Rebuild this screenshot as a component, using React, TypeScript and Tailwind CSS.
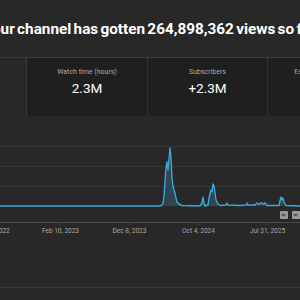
import React from "react";

const pts: [number, number][] = [
  [0, 206], [160, 206], [162, 205], [163, 203], [164, 196], [165, 182], [166, 168], [167, 162], [168, 170], [169, 160], [170, 148], [171, 158], [172, 178], [173, 186], [174, 190], [175, 193], [176, 198], [177, 202], [179, 204], [182, 205.5],
  [200, 206], [202, 203], [203, 197], [204, 203], [205, 206], [208, 205], [209, 198], [210, 194], [211, 190], [212, 192], [213, 184], [214, 186], [215, 193], [216, 200], [218, 204], [220, 205.5],
  [226, 205], [227, 203], [228, 205], [240, 205.5], [246, 205], [247, 203], [248, 205], [255, 205], [257, 203], [259, 204.5], [261, 202.5], [263, 204], [265, 203], [267, 205.5],
  [279, 205.5], [280, 201], [281, 197], [282, 200], [283, 198], [284, 202], [286, 205.5], [300, 206],
];

const linePath = pts.map((p, i) => `${i === 0 ? "M" : "L"}${p[0]} ${p[1]}`).join(" ");
const areaPath = `${linePath} L300 206 L0 206 Z`;

export default function App() {
  return (
    <div className="w-[300px] h-[300px] bg-[#282828] overflow-hidden relative" style={{ fontFamily: "Roboto, 'Liberation Sans', sans-serif" }}>
      <div className="h-[57px] flex items-center">
        <div className="whitespace-nowrap ml-[-17px] text-[15.3px] font-bold text-white pt-[1px] [word-spacing:-1.5px]">
          Your channel has gotten 264,898,362 views so far
        </div>
      </div>
      <div className="h-[59px] border-t border-[#3a3a3a] flex">
        <div className="w-[27px] shrink-0 border-r border-[#3a3a3a] bg-[#282828]" />
        <div className="w-[121px] shrink-0 bg-[#1f1f1f] border-r border-[#333] flex flex-col items-center pt-[10px]">
          <div className="text-[7px] text-[#aaaaaa] leading-[9px]">Watch time (hours)</div>
          <div className="text-[13.5px] text-white leading-[16px] mt-[3px]">2.3M</div>
        </div>
        <div className="w-[120px] shrink-0 bg-[#1f1f1f] border-r border-[#333] flex flex-col items-center pt-[10px]">
          <div className="text-[7px] text-[#aaaaaa] leading-[9px]">Subscribers</div>
          <div className="text-[13.5px] text-white leading-[16px] mt-[3px]">+2.3M</div>
        </div>
        <div className="w-[60px] shrink-0 bg-[#1f1f1f] flex flex-col items-center pt-[10px]">
          <div className="text-[7px] text-[#aaaaaa] leading-[9px] whitespace-nowrap ml-[50px]">Estimated revenue</div>
        </div>
      </div>
      <div className="relative h-[171px]">
        <svg width="300" height="120" viewBox="0 116 300 120" className="block">
          <line x1="0" y1="146.5" x2="300" y2="146.5" stroke="#363636" strokeWidth="1" />
          <line x1="0" y1="166.5" x2="300" y2="166.5" stroke="#363636" strokeWidth="1" />
          <line x1="0" y1="186.5" x2="300" y2="186.5" stroke="#363636" strokeWidth="1" />
          <path d={areaPath} fill="#2f4550" />
          <path d={linePath} fill="none" stroke="#3aa8d8" strokeWidth="1.4" strokeLinejoin="round" />
          <line x1="0" y1="222.5" x2="300" y2="222.5" stroke="#4a4a4a" strokeWidth="1" />
          {[60, 129, 198, 267].map((x) => (
            <line key={x} x1={x + 0.5} y1="222" x2={x + 0.5} y2="225" stroke="#4a4a4a" strokeWidth="1" />
          ))}
          <g>
            <rect x="280" y="211" width="8" height="8" rx="1" fill="#9c9c9c" />
            <path d="M282 213.5 L282 216.5 M283 215 L286 215 M283 215 L284.5 213.8 M283 215 L284.5 216.2" stroke="#3a3a3a" strokeWidth="0.8" fill="none" />
            <rect x="292" y="211" width="8" height="8" rx="1" fill="#9c9c9c" />
            <path d="M294 213.5 L294 216.5 M295 215 L298 215 M295 215 L296.5 213.8 M295 215 L296.5 216.2" stroke="#3a3a3a" strokeWidth="0.8" fill="none" />
          </g>
        </svg>
        <div className="flex ml-[-43px] mt-[-9px] text-[6.5px] text-[#aaaaaa] leading-[8px] whitespace-nowrap">
          {["Apr 15, 2022", "Feb 10, 2023", "Dec 8, 2023", "Oct 4, 2024", "Jul 31, 2025"].map((l) => (
            <div key={l} className="w-[69px] shrink-0 text-center">{l}</div>
          ))}
        </div>
      </div>
      <div className="border-t border-[#3a3a3a]" />
    </div>
  );
}
